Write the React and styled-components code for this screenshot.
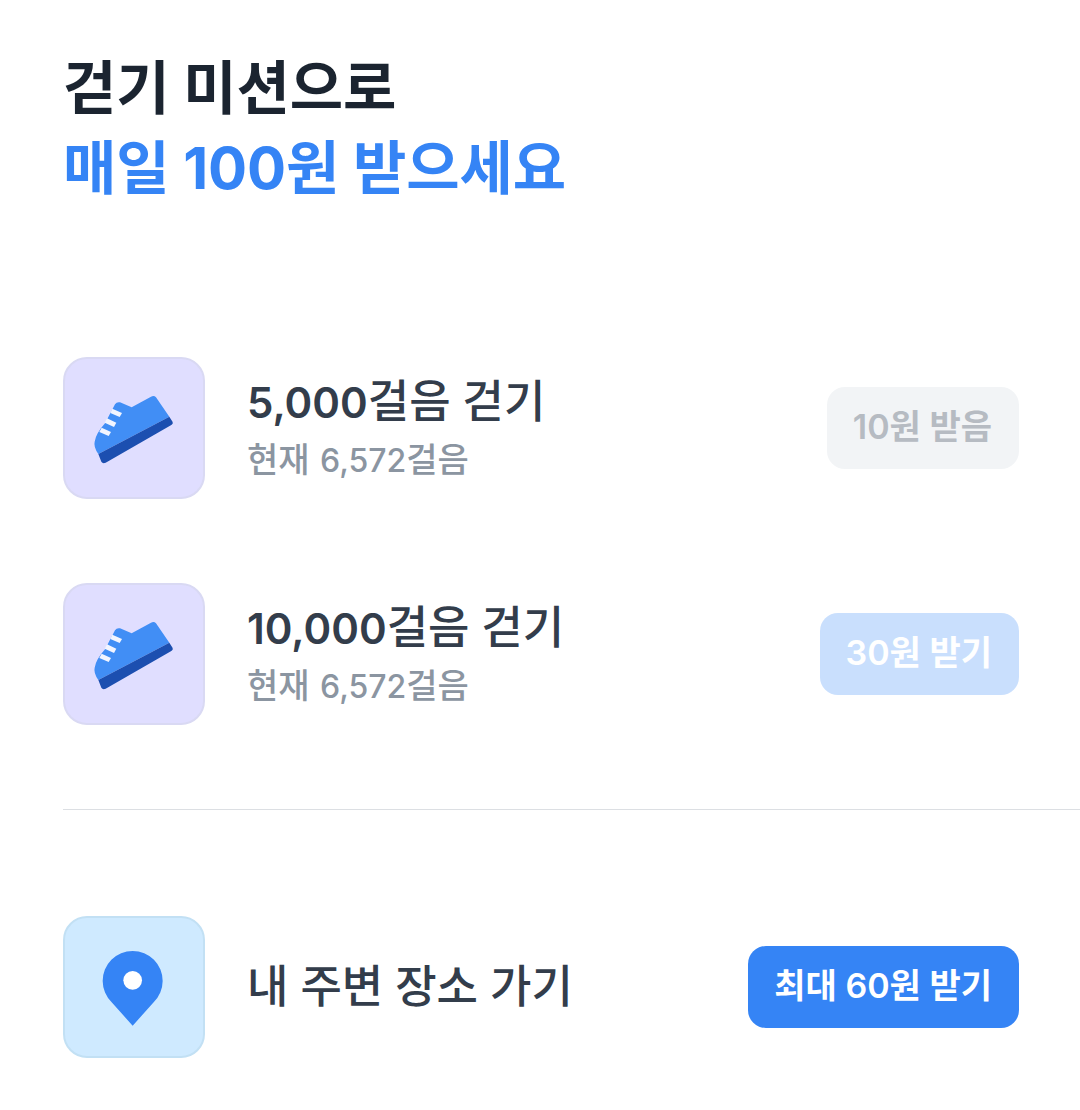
import React from "react";
import styled, { createGlobalStyle } from "styled-components";

const Global = createGlobalStyle`
  html, body { margin: 0; padding: 0; background: #fff; }
  body { font-family: Inter, "Noto Sans CJK KR", sans-serif; }
`;
const Page = styled.div`
  width: 1080px; height: 1110px; overflow: hidden; box-sizing: border-box;
  padding: 48px 0 0 63px; display: flex; flex-direction: column;
`;
const Heading = styled.h1`
  margin: 0 0 149px; font-size: 58px; line-height: 80px; font-weight: 700;
  color: #1b2430; letter-spacing: -0.1px;
`;
const Accent = styled.span` display: block; color: #3584f5; `;
const Missions = styled.div` display: flex; flex-direction: column; gap: 84px; padding-right: 61px; `;
const Row = styled.div` display: flex; align-items: center; height: 142px; `;
const IconBox = styled.div`
  width: 142px; height: 142px; box-sizing: border-box; flex: none; border-radius: 24px;
  background: ${p => p.$bg}; border: 2px solid ${p => p.$line}; overflow: hidden;
  svg { display: block; margin: -2px; width: 142px; height: 142px; }
`;
const Body = styled.div` flex: 1; margin-left: 42px; display: flex; flex-direction: column; gap: 8px; `;
const Title = styled.div` font-size: 42px; line-height: 56px; font-weight: 600; color: #333d4b; `;
const Han = styled.span` font-size: 45px; font-weight: 500; `;
const Sub = styled.div` font-size: 32px; line-height: 42px; font-weight: 500; word-spacing: 2px; color: #8b95a1; `;
const SubHan = styled.span` font-size: 34px; `;
const Action = styled.div`
  height: 82px; box-sizing: border-box; padding: 0 27px 7px 26px; display: flex; align-items: center;
  border-radius: 18px; font-size: 34px; font-weight: 600;
  background: ${p => p.$bg}; color: ${p => p.$fg};
`;
const Divider = styled.hr` border: 0; height: 1px; background: #dcdfe3; margin: 84px 0 106px; `;

const Shoe = () => (
  <svg viewBox="39 36 426 426" aria-hidden="true">
    <path d="M195 178 Q200 170 210 172 L245 187 L303 155 Q312 150 318 157 L358 215 L145 327 Q130 305 134 290 Q138 265 165 235 Z" fill="#418ef5" />
    <path d="M358 215 L368 231 Q370 237 364 240 L167 353 Q158 357 154 350 L145 327 Z" fill="#1c4fb0" />
    <g fill="#f2f5ff">
      <path d="M187 191 L216 204 L209 216 L181 204 Z" />
      <path d="M171 220 L199 233 L192 246 L164 233 Z" />
      <path d="M155 248 L183 261 L176 273 L148 261 Z" />
    </g>
  </svg>
);
const Pin = () => (
  <svg viewBox="39 33 426 426" aria-hidden="true">
    <path d="M248 362 L185 292 A90 90 0 1 1 311 292 Z" fill="#3584f5" />
    <circle cx="248" cy="226" r="28" fill="#fff" />
  </svg>
);

export default function App() {
  return (
    <Page>
      <Global />
      <Heading>걷기 미션으로<Accent>매일 100원 받으세요</Accent></Heading>
      <Missions>
        <Row>
          <IconBox $bg="#e0deff" $line="#d9d9f3"><Shoe /></IconBox>
          <Body>
            <Title>5,000<Han>걸음 걷기</Han></Title>
            <Sub><SubHan>현재</SubHan> 6,572<SubHan>걸음</SubHan></Sub>
          </Body>
          <Action $bg="#f2f4f6" $fg="#b6bbc2">10원 받음</Action>
        </Row>
        <Row>
          <IconBox $bg="#e0deff" $line="#d9d9f3"><Shoe /></IconBox>
          <Body>
            <Title>10,000<Han>걸음 걷기</Han></Title>
            <Sub><SubHan>현재</SubHan> 6,572<SubHan>걸음</SubHan></Sub>
          </Body>
          <Action $bg="#c9dffd" $fg="#ffffff">30원 받기</Action>
        </Row>
      </Missions>
      <Divider />
      <Missions>
        <Row>
          <IconBox $bg="#cfeaff" $line="#c2e0f4"><Pin /></IconBox>
          <Body><Title><Han>내 주변 장소 가기</Han></Title></Body>
          <Action $bg="#3584f5" $fg="#ffffff">최대 60원 받기</Action>
        </Row>
      </Missions>
    </Page>
  );
}
